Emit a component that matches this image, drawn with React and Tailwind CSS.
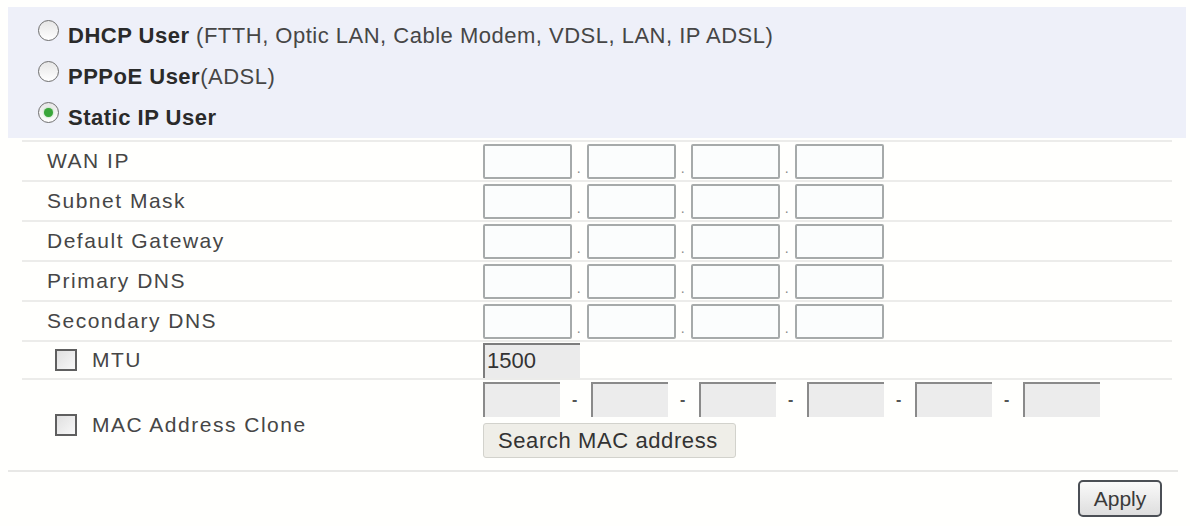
import React, { useState } from "react";

const ipRows = ["WAN IP", "Subnet Mask", "Default Gateway", "Primary DNS", "Secondary DNS"];

const Radio = ({ checked }) => (
    <span className="relative -mt-[10px] mr-[9px] flex h-[21px] w-[21px] shrink-0 items-center justify-center rounded-full border-[1.5px] border-[#6f6f6f] bg-gradient-to-b from-[#e6e6e6] to-white">
        {checked && <span className="h-[9px] w-[9px] rounded-full bg-[#3aa63a] shadow-[0_0_2px_#7c7]" />}
    </span>
);

const Check = () => (
    <span className="h-[22px] w-[22px] shrink-0 border-2 border-[#5f5f5f] bg-gradient-to-br from-[#e0e0e0] to-[#f8f8f8]" />
);

const IpInputs = () => (
    <div className="flex items-stretch">
        {[0, 1, 2, 3].map((i) => (
            <React.Fragment key={i}>
                {i > 0 && (
                    <span className="flex w-[15px] items-end justify-center pb-[4px] text-[14px] leading-none text-[#888]">.</span>
                )}
                <input className="h-[35px] w-[89px] rounded-[2px] border-2 border-[#a6aaaa] bg-[#fbfdfd] outline-none" />
            </React.Fragment>
        ))}
    </div>
);

const App = () => {
    const [mode] = useState("static");

    return (
        <div className="min-h-[526px] w-[1190px] bg-[#fffffd] pl-2 pt-[7px] font-['Liberation_Sans',Arial,sans-serif] text-[#464646]">
            {/* connection type */}
            <div className="w-[1178px] bg-[#eef0f9] pt-[8px] text-[22px] tracking-[0.5px]">
                <label className="flex h-[41px] items-center pl-[30px]">
                    <Radio checked={mode === "dhcp"} />
                    <b className="text-[#2a2a2a]">DHCP User</b>
                    <span>&nbsp;(FTTH, Optic LAN, Cable Modem, VDSL, LAN, IP ADSL)</span>
                </label>
                <label className="flex h-[41px] items-center pl-[30px]">
                    <Radio checked={mode === "pppoe"} />
                    <b className="text-[#2a2a2a]">PPPoE User</b>
                    <span>(ADSL)</span>
                </label>
                <label className="flex h-[41px] items-center pl-[30px]">
                    <Radio checked={mode === "static"} />
                    <b className="text-[#2a2a2a]">Static IP User</b>
                </label>
            </div>

            {/* static settings */}
            <div className="mt-[2px] w-[1170px] border-b-2 border-[#e8e8e6]">
                <div className="ml-[14px] w-[1150px] border-t-2 border-[#ececea] text-[21px] tracking-[1.5px]">
                    {ipRows.map((label) => (
                        <div key={label} className="flex h-[40px] items-center border-b-2 border-[#ececea]">
                            <span className="w-[461px] pl-[25px]">{label}</span>
                            <IpInputs />
                        </div>
                    ))}

                    <div className="flex h-[38px] items-center border-b-2 border-[#ececea]">
                        <div className="flex w-[461px] items-center pl-[33px]">
                            <Check />
                            <span className="ml-[15px]">MTU</span>
                        </div>
                        <input
                            defaultValue="1500"
                            className="h-[35px] w-[97px] border-l-2 border-t-2 border-[#7d7d7d] bg-[#ebebeb] pl-[2px] text-[22px] tracking-normal text-[#333] outline-none"
                        />
                    </div>

                    <div className="flex h-[90px]">
                        <div className="flex w-[461px] items-center pl-[33px]">
                            <Check />
                            <span className="ml-[15px]">MAC Address Clone</span>
                        </div>
                        <div className="flex flex-col gap-[6px] pt-[2px]">
                            <div className="flex items-center">
                                {[0, 1, 2, 3, 4, 5].map((i) => (
                                    <React.Fragment key={i}>
                                        {i > 0 && (
                                            <span className="w-[31px] text-center text-[16px] font-bold leading-none text-[#555]">-</span>
                                        )}
                                        <input
                                            disabled
                                            className="h-[35px] w-[77px] border-l-2 border-t-2 border-[#8a8a8a] bg-[#ececec] outline-none"
                                        />
                                    </React.Fragment>
                                ))}
                            </div>
                            <button className="h-[35px] w-[253px] rounded-[3px] border border-[#d2d2cc] bg-[#efeee8] pl-[14px] text-left text-[22px] tracking-[0.6px] text-[#333]">
                                Search MAC address
                            </button>
                        </div>
                    </div>
                </div>
            </div>

            {/* apply */}
            <div className="flex w-[1154px] justify-end pt-[8px]">
                <button className="h-[37px] w-[84px] rounded-[5px] border-2 border-[#4b4f55] bg-gradient-to-b from-[#fafafa] to-[#dedede] text-[21px] text-[#3a3a3a]">
                    Apply
                </button>
            </div>
        </div>
    );
};

export default App;
